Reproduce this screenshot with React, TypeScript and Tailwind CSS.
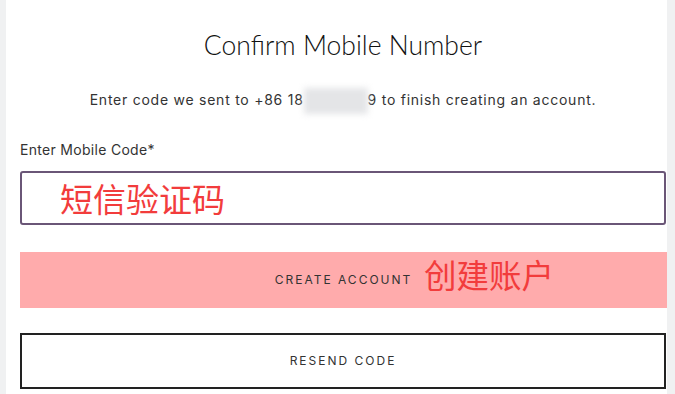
export default function App() {
  return (
    <div className="flex h-[394px] w-[675px] overflow-hidden bg-[#f0f1f2]">
      <div className="ml-[6px] w-[661px] bg-white pl-[14px] pr-[1px]" style={{ fontFamily: 'Inter, "Noto Sans CJK SC", sans-serif' }}>
        <h1 className="mt-[28px] text-center text-[26.5px] font-light leading-[34px] text-[#111]" style={{ fontFamily: 'Lato, sans-serif' }}>
          Confirm Mobile Number
        </h1>
        <p className="mt-[29px] text-center text-[14px] leading-[18px] tracking-[0.75px] text-[#333]">
          Enter code we sent to +86 18
          <span className="relative inline-block h-[14px] w-[64px] align-middle">
            <span className="absolute -inset-y-[6px] inset-x-0 bg-[#e4e5e7] blur-[3px]" />
          </span>
          9 to finish creating an account.
        </p>
        <label className="mt-[32px] block text-[14px] leading-[18px] tracking-[0.3px] text-[#333]">Enter Mobile Code*</label>
        <div className="mt-[12px] flex h-[54px] items-center rounded-[3px] border-2 border-[#6a5677] pl-[38px]">
          <span className="text-[33px] leading-none text-[#f23c3c]" style={{ fontFamily: '"Noto Sans CJK SC", sans-serif' }}>
            短信验证码
          </span>
        </div>
        <button className="relative mt-[27px] flex h-[56px] w-[647px] items-center justify-center bg-[#ffabac] text-[12px] tracking-[2px] text-[#333]">
          CREATE ACCOUNT
          <span className="absolute left-[404px] top-[6px] text-[32.5px] leading-none tracking-normal text-[#f23c3c]" style={{ fontFamily: '"Noto Sans CJK SC", sans-serif' }}>
            创建账户
          </span>
        </button>
        <button className="mt-[25px] flex h-[56px] w-[646px] items-center justify-center border-2 border-[#222] text-[12px] tracking-[2px] text-[#333]">
          RESEND CODE
        </button>
      </div>
    </div>
  )
}
